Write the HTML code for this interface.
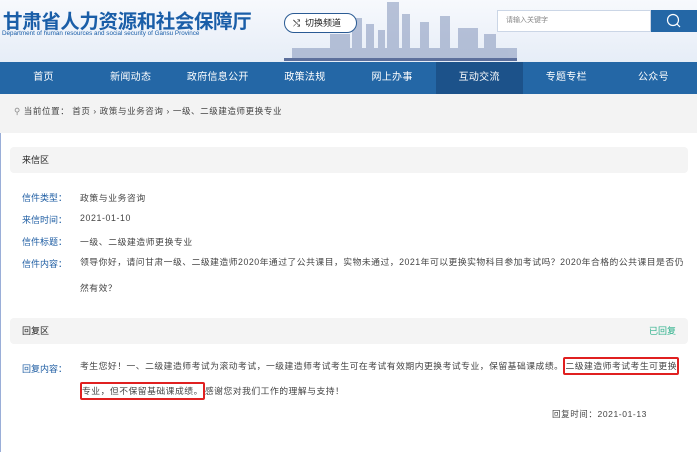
<!DOCTYPE html>
<html><head><meta charset="utf-8"><style>
*{margin:0;padding:0;box-sizing:border-box}
body{width:697px;height:452px;overflow:hidden;font-family:"Liberation Sans","Noto Sans CJK SC",sans-serif;background:#f3f3f3;position:relative;font-size:9px;color:#333}
.hdr{position:absolute;left:0;top:0;width:697px;height:62px;background:linear-gradient(180deg,#f7f9fd,#e6edf7)}
.t1{position:absolute;left:3px;top:5px;font-size:19.5px;font-weight:bold;color:#1a5ea8;letter-spacing:-0.4px}
.t2{position:absolute;left:2px;top:30px;font-size:6.3px;color:#1a5ea8}
.sw{position:absolute;left:284px;top:13px;width:73px;height:20px;border:1px solid #2a5b94;border-radius:10px;background:#fff;font-size:9px;line-height:18px;padding-left:20px;color:#222}
.sw:before{content:"⤭";position:absolute;left:8px;top:0;font-size:9px}
.srch{position:absolute;left:497px;top:10px;width:154px;height:22px;background:#fff;border:1px solid #cbd6e6;font-size:7px;color:#888;line-height:20px;padding-left:8px}
.sb{position:absolute;left:651px;top:10px;width:46px;height:22px;background:#2467a6}
.city{position:absolute;left:262px;top:0;width:255px;height:62px}
.nav{position:absolute;left:0;top:62px;width:697px;height:32px;background:#2467a6;display:flex}
.nav div{flex:1;text-align:center;color:#fff;font-size:10px;line-height:32px;letter-spacing:0.3px}
.nav .on{background:#1c528a}
.bc{position:absolute;left:14px;top:105px;font-size:8.5px;color:#444;letter-spacing:0.6px}
.main{position:absolute;left:0;top:133px;width:697px;height:319px;background:#fff;border-left:1px solid #9aaed8;letter-spacing:0.6px}
.sh{position:absolute;left:9px;width:678px;height:26px;background:#f4f4f4;border-radius:4px;font-size:9px;color:#222;line-height:26px;padding-left:12px;letter-spacing:0}
.lb{position:absolute;left:21px;color:#1f5ea3;font-size:9px;letter-spacing:0}
.vl{position:absolute;left:79px;font-size:8.8px;color:#444}
.rb{border:2px solid #e02020;border-radius:2px;padding:2px 0}
</style></head><body>
<div class="hdr">
<div class="t1">甘肃省人力资源和社会保障厅</div>
<div class="t2">Department of human resources and social security of Gansu Province</div>
<svg class="city" viewBox="0 0 255 62"><g fill="#8d9dc0" opacity=".6">
<rect x="125" y="2" width="12" height="58"/><rect x="140" y="14" width="8" height="46"/>
<rect x="90" y="18" width="10" height="42"/><rect x="104" y="24" width="8" height="36"/>
<rect x="158" y="22" width="9" height="38"/><rect x="178" y="16" width="10" height="44"/>
<rect x="68" y="34" width="20" height="26"/><rect x="116" y="30" width="7" height="30"/>
<rect x="196" y="28" width="20" height="32"/><rect x="222" y="34" width="12" height="26"/>
<rect x="30" y="48" width="225" height="12"/></g>
<rect x="22" y="58" width="233" height="3" fill="#5c6f9c"/></svg>
<div class="sw">切换频道</div>
<div class="srch">请输入关键字</div>
<div class="sb"><svg width="46" height="22"><circle cx="22" cy="10" r="5.5" fill="none" stroke="#fff" stroke-width="1.2"/><line x1="26" y1="14" x2="29" y2="17" stroke="#fff" stroke-width="1.2"/></svg></div>
</div>
<div class="nav"><div>首页</div><div>新闻动态</div><div>政府信息公开</div><div>政策法规</div><div>网上办事</div><div class="on">互动交流</div><div>专题专栏</div><div>公众号</div></div>
<div class="bc"><span style="color:#888">⚲</span> 当前位置： 首页 › 政策与业务咨询 › 一级、二级建造师更换专业</div>
<div class="main">
<div class="sh" style="top:14px">来信区</div>
<div class="lb" style="top:58px">信件类型：</div><div class="vl" style="top:58px">政策与业务咨询</div>
<div class="lb" style="top:80px">来信时间：</div><div class="vl" style="top:80px">2021-01-10</div>
<div class="lb" style="top:102px">信件标题：</div><div class="vl" style="top:102px">一级、二级建造师更换专业</div>
<div class="lb" style="top:124px">信件内容：</div><div class="vl" style="top:116px;width:606px;line-height:26px;letter-spacing:0.5px">领导你好，请问甘肃一级、二级建造师2020年通过了公共课目，实物未通过，2021年可以更换实物科目参加考试吗？2020年合格的公共课目是否仍然有效？</div>
<div class="sh" style="top:185px">回复区<span style="position:absolute;right:12px;color:#2bb08a">已回复</span></div>
<div class="lb" style="top:229px">回复内容：</div><div class="vl" style="top:221px;width:610px;line-height:25px;letter-spacing:0.5px">考生您好！一、二级建造师考试为滚动考试，一级建造师考试考生可在考试有效期内更换考试专业，保留基础课成绩。<span class="rb">二级建造师考试考生可更换</span><br><span class="rb">专业，但不保留基础课成绩。</span>感谢您对我们工作的理解与支持！</div>
<div style="position:absolute;left:551px;top:275px;font-size:8.5px;color:#444">回复时间：2021-01-13</div>
</div>
</body></html>
